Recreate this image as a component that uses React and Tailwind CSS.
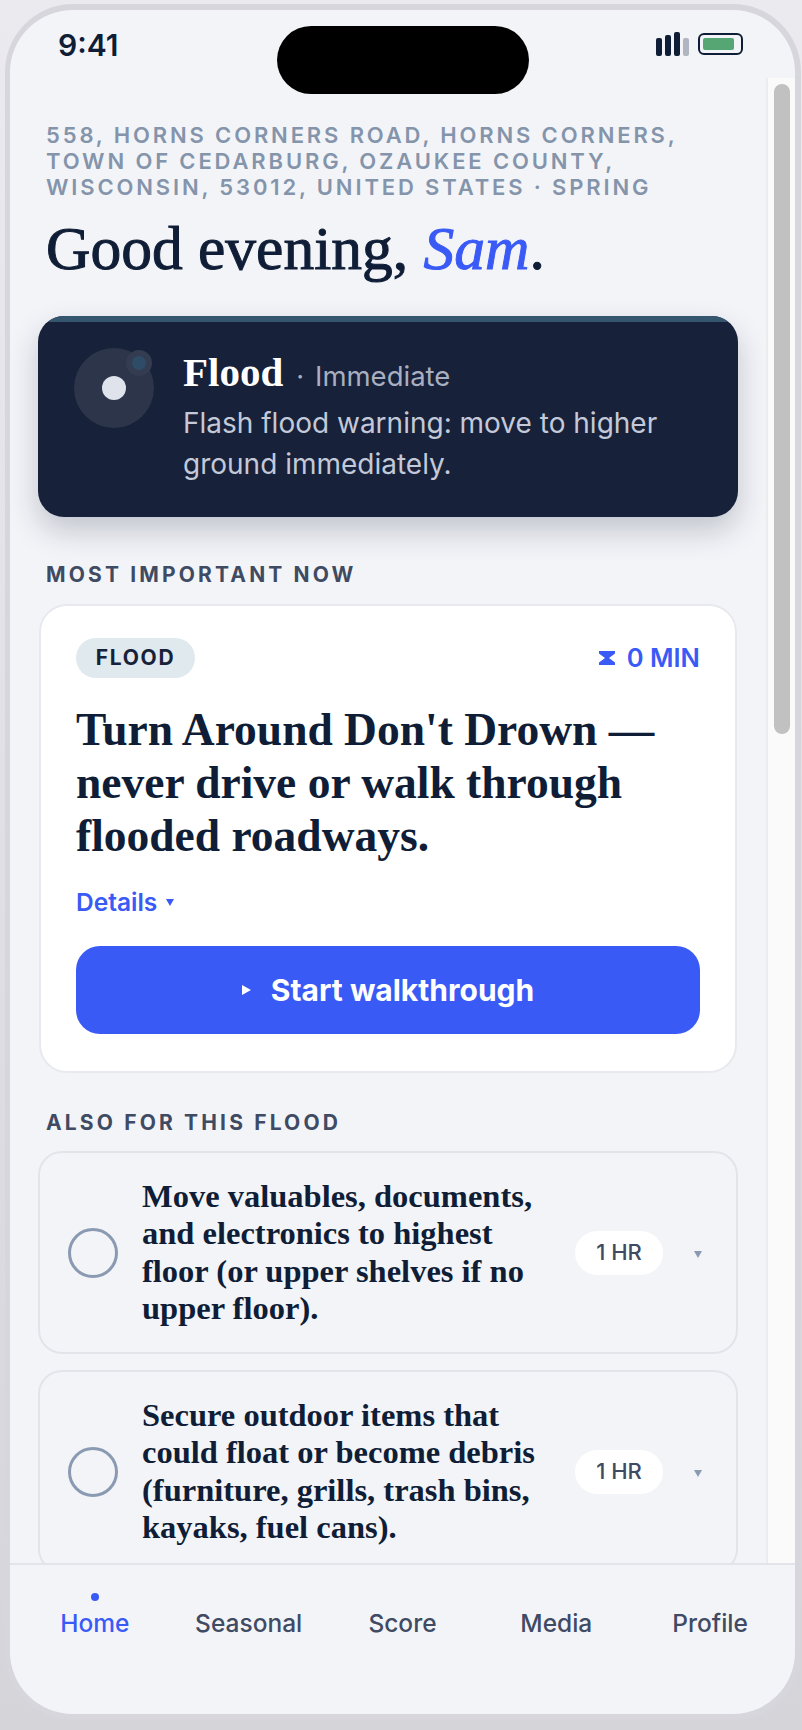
import React from 'react';

const SERIF = "font-['Liberation_Serif',serif]";

const tasks = [
  {
    id: 1,
    text: 'Move valuables, documents, and electronics to highest floor (or upper shelves if no upper floor).',
    time: '1 HR',
  },
  {
    id: 2,
    text: 'Secure outdoor items that could float or become debris (furniture, grills, trash bins, kayaks, fuel cans).',
    time: '1 HR',
  },
];

const navItems = ['Home', 'Seasonal', 'Score', 'Media', 'Profile'];

const StatusBar = () => (
  <div className="relative flex h-[68px] shrink-0 items-start justify-between pl-[48px] pr-[52px] pt-[20px]">
    <span className="text-[30px] font-semibold leading-[30px] text-[#0f1e36]">9:41</span>
    <div className="absolute left-[267px] top-[16px] h-[68px] w-[252px] rounded-[34px] bg-black" />
    <div className="mt-[2px] flex items-center gap-[9px]">
      <div className="flex items-end gap-[3px]">
        <div className="h-[18px] w-[6px] rounded-[2px] bg-[#0f1e36]" />
        <div className="h-[21px] w-[6px] rounded-[2px] bg-[#0f1e36]" />
        <div className="h-[24px] w-[6px] rounded-[2px] bg-[#0f1e36]" />
        <div className="h-[18px] w-[6px] rounded-[2px] bg-[#b0b5bf]" />
      </div>
      <div className="h-[22px] w-[45px] rounded-[6px] border-2 border-[#0f1e36] p-[3px] pr-[7px]">
        <div className="h-full w-full rounded-[2px] bg-[#55a673]" />
      </div>
    </div>
  </div>
);

const HeroAlert = () => (
  <div className="h-[201px] overflow-hidden rounded-[26px] bg-[#172139] shadow-[0_14px_30px_rgba(24,34,58,0.22)]">
    <div className="h-[6px] bg-[#34566f]" />
    <div className="flex gap-[29px] pl-[36px] pt-[26px]">
      <div className="relative flex h-[80px] w-[80px] shrink-0 items-center justify-center rounded-full bg-[#2c3549]">
        <div className="h-[24px] w-[24px] rounded-full bg-[#dfe3ec]" />
        <div className="absolute left-[52px] top-[2px] flex h-[26px] w-[26px] items-center justify-center rounded-full bg-[#333c50]">
          <div className="h-[14px] w-[14px] rounded-full bg-[#2f4c66]" />
        </div>
      </div>
      <div className="w-[500px]">
        <div className="flex items-baseline leading-[48px]">
          <span className={`${SERIF} text-[41px] font-bold text-white`}>Flood</span>
          <span className="ml-[13px] text-[27px] text-[#a9afc0]">·</span>
          <span className="ml-[11px] text-[27.5px] text-[#a9afc0]">Immediate</span>
        </div>
        <p className="mt-[2px] text-[28px] leading-[41px] text-[#c3c9d8]">
          Flash flood warning: move to higher ground immediately.
        </p>
      </div>
    </div>
  </div>
);

const SectionLabel = ({ children }) => (
  <h2 className="pl-[8px] text-[21px] font-bold uppercase leading-[26px] tracking-[0.15em] text-[#3f4a63]">
    {children}
  </h2>
);

const MainTask = () => (
  <div className="mx-[1px] rounded-[28px] border-2 border-[#e8e9ee] bg-white px-[35px] pb-[37px] pt-[32px]">
    <div className="flex items-center justify-between">
      <span className="flex h-[40px] w-[119px] items-center justify-center rounded-full bg-[#dfe9ee] text-[21px] font-bold tracking-[0.08em] text-[#172139]">
        FLOOD
      </span>
      <span className="flex items-center gap-[12px] text-[25.5px] font-semibold text-[#3a5af6]">
        <svg width="16" height="16" viewBox="0 0 16 16" fill="currentColor">
          <path d="M0 1h16v2.4L10 8l6 4.6V15H0v-2.4L6 8 0 3.4z" />
        </svg>
        0 MIN
      </span>
    </div>
    <h3 className={`${SERIF} mt-[25px] text-[45.5px] font-bold leading-[53px] text-[#0f1e36]`}>
      Turn Around Don't Drown — never drive or walk through flooded roadways.
    </h3>
    <button className="mt-[25px] flex items-center gap-[9px] text-[24.5px] font-semibold leading-[30px] text-[#3a5af6]">
      Details
      <svg width="8" height="8" viewBox="0 0 8 8" fill="currentColor">
        <path d="M0 1h8L4 8z" />
      </svg>
    </button>
    <button className="mt-[29px] flex h-[88px] w-full items-center justify-center gap-[20px] rounded-[24px] bg-[#3a5af6] text-[30px] font-bold text-white">
      <svg width="9" height="10" viewBox="0 0 9 10" fill="currentColor">
        <path d="M0 0l9 5-9 5z" />
      </svg>
      Start walkthrough
    </button>
  </div>
);

const TaskRow = ({ task }) => (
  <div className="flex h-[203px] shrink-0 items-center rounded-[24px] border-2 border-[#e3e4ea] pl-[28px] pr-[31px]">
    <div className="h-[50px] w-[50px] shrink-0 rounded-full border-[3px] border-[#8a9ab2]" />
    <p className={`${SERIF} ml-[24px] w-[396px] text-[32.5px] font-bold leading-[37.5px] text-[#0f1e36]`}>
      {task.text}
    </p>
    <span className="ml-[37px] flex h-[44px] w-[88px] shrink-0 items-center justify-center rounded-full bg-white text-[22px] font-medium text-[#3f4a63]">
      {task.time}
    </span>
    <svg className="ml-[31px] mt-[3px] shrink-0" width="8" height="8" viewBox="0 0 8 8" fill="#8a9ab2">
      <path d="M0 1h8L4 8z" />
    </svg>
  </div>
);

const BottomNav = () => (
  <nav className="grid h-[151px] shrink-0 grid-cols-5 border-t-2 border-[#e3e4ea] px-[8px] pt-[28px]">
    {navItems.map((item, index) => (
      <div key={item} className="flex flex-col items-center">
        <div className={`h-[8px] w-[8px] rounded-full ${index === 0 ? 'bg-[#3a5af6]' : 'bg-transparent'}`} />
        <span className={`mt-[7px] text-[24.5px] font-medium leading-[30px] ${index === 0 ? 'text-[#3a5af6]' : 'text-[#3f4a63]'}`}>
          {item}
        </span>
      </div>
    ))}
  </nav>
);

export default function App() {
  return (
    <div className="h-[1730px] w-[802px] overflow-hidden bg-gradient-to-b from-[#ebebef] to-[#d4d4d9] pb-[10px] pl-[5px] pt-[4px] font-['Inter',sans-serif]">
      <div className="flex h-[1716px] w-[796px] flex-col overflow-hidden rounded-[68px] border-[6px] border-[#d6d6dc] border-l-[5px] bg-[#f3f4f8]">
        <StatusBar />
        <div className="flex min-h-0 flex-1">
          <main className="min-w-0 flex-1 overflow-hidden pl-[28px] pr-[28px]">
            <p className="w-[680px] pl-[8px] pt-[44px] text-[22px] font-semibold uppercase leading-[26px] tracking-[0.13em] text-[#8494ab]">
              558, Horns Corners Road, Horns Corners, Town of Cedarburg, Ozaukee County, Wisconsin, 53012, United States · Spring
            </p>
            <h1 className={`${SERIF} mb-[32px] mt-[12px] pl-[8px] text-[61.5px] font-normal leading-[72px] text-[#0f1e36] [-webkit-text-stroke:1px_currentColor]`}>
              Good evening, <em className="text-[#3a5af6]">Sam</em>.
            </h1>
            <HeroAlert />
            <div className="mb-[16px] mt-[45px]">
              <SectionLabel>Most important now</SectionLabel>
            </div>
            <MainTask />
            <div className="mb-[15px] mt-[37px]">
              <SectionLabel>Also for this flood</SectionLabel>
            </div>
            <div className="flex flex-col gap-[16px]">
              {tasks.map((task) => (
                <TaskRow key={task.id} task={task} />
              ))}
            </div>
          </main>
          <div className="w-[29px] shrink-0 border-l-2 border-[#ececef] bg-[#fafafa] pl-[6px] pt-[6px]">
            <div className="h-[650px] w-[16px] rounded-full bg-[#c1c1c1]" />
          </div>
        </div>
        <BottomNav />
      </div>
    </div>
  );
}
